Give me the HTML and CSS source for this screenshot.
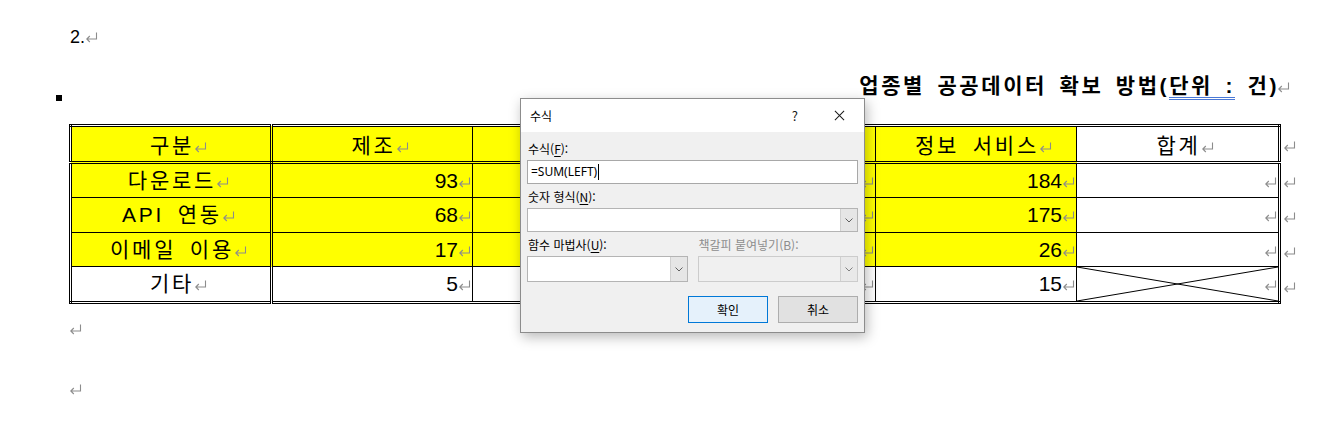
FILE: index.html
```html
<!DOCTYPE html>
<html lang="ko">
<head>
<meta charset="utf-8">
<title>수식</title>
<link rel="stylesheet" href="styles.css">
</head>
<body>
<svg class="defs" width="0" height="0" aria-hidden="true">
  <symbol id="pm" viewBox="0 0 13 11">
    <path d="M11.5 0.5 V7 H1.8 M4.8 4 L1.8 7 L4.8 10" fill="none" stroke="#8c8c8c" stroke-width="1.1"/>
  </symbol>
</svg>
<div class="page">
  <p class="num-line">2.<svg class="pm"><use href="#pm"/></svg></p>

  <div class="caption-row">
    <span class="anchor"></span>
    <p class="caption">업종별 공공데이터 확보 방법(<span class="gram">단위 :</span> 건)<svg class="pm"><use href="#pm"/></svg></p>
  </div>

  <div class="table-wrap">
    <table class="data">
      <colgroup>
        <col class="w1"><col class="w2"><col class="w3"><col class="w4"><col class="w5"><col class="w6">
      </colgroup>
      <tr class="head">
        <td class="y first ctr">구분<svg class="pm c"><use href="#pm"/></svg></td>
        <td class="y ctr">제조<svg class="pm c"><use href="#pm"/></svg></td>
        <td class="y ctr">유통<svg class="pm c"><use href="#pm"/></svg></td>
        <td class="y ctr">금융<svg class="pm c"><use href="#pm"/></svg></td>
        <td class="y ctr">정보 서비스<svg class="pm c"><use href="#pm"/></svg></td>
        <td class="ctr">합계<svg class="pm c"><use href="#pm"/></svg></td>
      </tr>
      <tr class="r1">
        <td class="y first ctr">다운로드<svg class="pm c"><use href="#pm"/></svg></td>
        <td class="y num">93<svg class="pm"><use href="#pm"/></svg></td>
        <td class="y num">120<svg class="pm"><use href="#pm"/></svg></td>
        <td class="y num">88<svg class="pm"><use href="#pm"/></svg></td>
        <td class="y num">184<svg class="pm"><use href="#pm"/></svg></td>
        <td class="num"><svg class="pm"><use href="#pm"/></svg></td>
      </tr>
      <tr class="r2">
        <td class="y first ctr">API 연동<svg class="pm c"><use href="#pm"/></svg></td>
        <td class="y num">68<svg class="pm"><use href="#pm"/></svg></td>
        <td class="y num">97<svg class="pm"><use href="#pm"/></svg></td>
        <td class="y num">54<svg class="pm"><use href="#pm"/></svg></td>
        <td class="y num">175<svg class="pm"><use href="#pm"/></svg></td>
        <td class="num"><svg class="pm"><use href="#pm"/></svg></td>
      </tr>
      <tr class="r3">
        <td class="y first ctr">이메일 이용<svg class="pm c"><use href="#pm"/></svg></td>
        <td class="y num">17<svg class="pm"><use href="#pm"/></svg></td>
        <td class="y num">21<svg class="pm"><use href="#pm"/></svg></td>
        <td class="y num">12<svg class="pm"><use href="#pm"/></svg></td>
        <td class="y num">26<svg class="pm"><use href="#pm"/></svg></td>
        <td class="num"><svg class="pm"><use href="#pm"/></svg></td>
      </tr>
      <tr class="r4">
        <td class="first ctr">기타<svg class="pm c"><use href="#pm"/></svg></td>
        <td class="num">5<svg class="pm"><use href="#pm"/></svg></td>
        <td class="num">8<svg class="pm"><use href="#pm"/></svg></td>
        <td class="num">3<svg class="pm"><use href="#pm"/></svg></td>
        <td class="num">15<svg class="pm"><use href="#pm"/></svg></td>
        <td class="num cross">
          <svg class="diag" viewBox="0 0 100 100" preserveAspectRatio="none"><path d="M0 0 L100 100 M0 100 L100 0" stroke="#000" stroke-width="1" vector-effect="non-scaling-stroke" fill="none"/></svg>
          <svg class="pm"><use href="#pm"/></svg>
        </td>
      </tr>
    </table>
    <div class="row-marks">
      <div class="rm h"><svg class="pm"><use href="#pm"/></svg></div>
      <div class="rm a"><svg class="pm"><use href="#pm"/></svg></div>
      <div class="rm b"><svg class="pm"><use href="#pm"/></svg></div>
      <div class="rm c3"><svg class="pm"><use href="#pm"/></svg></div>
      <div class="rm d"><svg class="pm"><use href="#pm"/></svg></div>
    </div>
  </div>

  <p class="empty first-empty"><svg class="pm"><use href="#pm"/></svg></p>
  <p class="empty"><svg class="pm"><use href="#pm"/></svg></p>
  <p class="empty last-empty"><svg class="pm"><use href="#pm"/></svg></p>

  <div class="dialog" role="dialog" aria-label="수식">
    <div class="titlebar">
      <span class="title">수식</span>
      <span class="help">?</span>
      <svg class="close" viewBox="0 0 12 12"><path d="M1 1 L11 11 M11 1 L1 11" stroke="#1a1a1a" stroke-width="1.1" fill="none"/></svg>
    </div>
    <div class="dbody">
      <div class="label">수식(<u>F</u>):</div>
      <div class="input">=SUM(LEFT)<span class="caret"></span></div>
      <div class="label">숫자 형식(<u>N</u>):</div>
      <div class="combo"><span class="cfield"></span><span class="cbtn"><svg viewBox="0 0 8 5"><path d="M0.5 0.5 L4 4 L7.5 0.5" stroke="#606060" fill="none"/></svg></span></div>
      <div class="pair">
        <div class="col">
          <div class="label">함수 마법사(<u>U</u>):</div>
          <div class="combo tall"><span class="cfield"></span><span class="cbtn"><svg viewBox="0 0 8 5"><path d="M0.5 0.5 L4 4 L7.5 0.5" stroke="#606060" fill="none"/></svg></span></div>
        </div>
        <div class="col">
          <div class="label dis">책갈피 붙여넣기(B):</div>
          <div class="combo tall disabled"><span class="cfield"></span><span class="cbtn"><svg viewBox="0 0 8 5"><path d="M0.5 0.5 L4 4 L7.5 0.5" stroke="#808080" fill="none"/></svg></span></div>
        </div>
      </div>
      <div class="buttons">
        <span class="btn default">확인</span>
        <span class="btn">취소</span>
      </div>
    </div>
  </div>
</div>
</body>
</html>
```

FILE: styles.css
```css
* { box-sizing: border-box; }
html, body { margin: 0; padding: 0; background: #fff; }
body {
  width: 1344px;
  height: 443px;
  overflow: hidden;
  font-family: "Liberation Sans", "Noto Sans CJK KR", sans-serif;
  color: #000;
}
.defs { position: absolute; width: 0; height: 0; }
.page { position: relative; padding-top: 27px; height: 443px; overflow: hidden; }
p { margin: 0; }

.pm { width: 13px; height: 11px; display: inline-block; vertical-align: baseline; }
.pm.c { margin-right: -13px; }

.num-line {
  margin-left: 70px;
  font-size: 18px;
  line-height: 20px;
  height: 20px;
}

.caption-row {
  display: flex;
  justify-content: space-between;
  align-items: flex-start;
  margin-top: 27px;
  height: 50px;
  padding-left: 56px;
  padding-right: 54px;
}
.anchor {
  width: 6px; height: 6px; background: #000;
  margin-top: 21px;
}
.caption {
  font-family: "Liberation Sans", "Noto Sans CJK KR", sans-serif;
  font-size: 21px;
  font-weight: bold;
  line-height: 24px;
  letter-spacing: 2.6px;
  word-spacing: 4px;
  white-space: nowrap;
}
.caption .pm { margin-left: -2px; }
.gram { border-bottom: 3px double #4a78d6; }

.table-wrap { display: flex; align-items: flex-start; margin-left: 69px; }
.data {
  border-collapse: collapse;
  table-layout: fixed;
  width: 1212px;
  border: 3px double #000;
  font-size: 21px;
}
.w1 { width: 201px; } .w2 { width: 201px; } .w3 { width: 202px; }
.w4 { width: 201px; } .w5 { width: 201px; } .w6 { width: 203px; }
.data td {
  border: 1px solid #000;
  padding: 0 1px 0 0;
  line-height: 24px;
  white-space: nowrap;
}
.data td.first { border-right: 3px double #000; }
.data tr.head td { border-bottom: 3px double #000; height: 37px; padding-top: 4px; }
.data tr.r1 td, .data tr.r2 td { height: 35px; }
.data tr.r3 td { height: 34px; }
.data tr.r4 td { height: 36px; }
.data td.y { background: #ffff00; }
.data td.ctr { text-align: center; letter-spacing: 2.75px; word-spacing: 5px; padding-left: 3px; }
.data td.num { text-align: right; }
.data td.cross { position: relative; }
.diag { position: absolute; left: 0; top: 0; width: 100%; height: 100%; }

.row-marks { display: flex; flex-direction: column; padding-top: 2px; padding-left: 2px; }
.rm { display: flex; align-items: center; padding-top: 4px; }
.rm.h { height: 37px; }
.rm.a, .rm.b { height: 35px; }
.rm.c3 { height: 34px; }
.rm.d { height: 36px; }

.empty { height: 60px; margin-left: 69px; }
.first-empty { margin-top: 17px; }
.last-empty { height: 20px; }

/* dialog */
.dialog {
  position: absolute;
  left: 520px;
  top: 98px;
  width: 345px;
  height: 235px;
  border: 1px solid #8c8c8c;
  background: #f0f0f0;
  box-shadow: 2px 4px 12px rgba(0,0,0,0.28);
  font-family: "Noto Sans CJK KR", "Noto Sans", sans-serif;
  font-size: 12px;
  color: #000;
  display: flex;
  flex-direction: column;
}
.titlebar {
  height: 33px;
  background: #fff;
  display: flex;
  align-items: center;
  padding-left: 9px;
}
.title { flex: 1; font-size: 12px; }
.help { font-size: 13px; margin-right: 36px; color: #1a1a1a; }
.close { width: 11px; height: 11px; margin-right: 19px; }
.dbody { padding: 8px 6px 0 6px; display: flex; flex-direction: column; }
.label { height: 20px; line-height: 18px; padding-left: 1px; }
.label u { text-underline-offset: 2px; }
.label.dis { color: #8d8d8d; }
.input {
  height: 24px;
  background: #fff;
  border: 1px solid #a8a8a8;
  line-height: 22px;
  padding-left: 3px;
  font-family: "Noto Sans", sans-serif;
  font-size: 12px;
  display: flex;
  align-items: center;
  margin-bottom: 4px;
}
.caret { width: 1px; height: 16px; background: #000; margin-left: 1px; }
.combo {
  height: 24px;
  background: #fff;
  border: 1px solid #b4b4b4;
  display: flex;
  margin-bottom: 4px;
}
.combo.tall { height: 26px; }
.cfield { flex: 1; }
.cbtn {
  width: 17px;
  background: #e6e6e6;
  border-left: 1px solid #d0d0d0;
  display: flex; align-items: center; justify-content: center;
}
.cbtn svg { width: 8px; height: 5px; }
.combo.disabled { background: #f0f0f0; border-color: #cccccc; }
.combo.disabled .cbtn { background: #e9e9e9; }
.pair { display: flex; gap: 10px; }
.pair .col { flex: 1; display: flex; flex-direction: column; }
.buttons { display: flex; justify-content: flex-end; gap: 10px; margin-top: 10px; }
.btn {
  width: 80px; height: 27px;
  border: 1px solid #adadad;
  background: #e1e1e1;
  display: flex; align-items: center; justify-content: center;
  font-size: 12px;
}
.btn.default { border-color: #0078d7; background: #e5f1fb; }
```
